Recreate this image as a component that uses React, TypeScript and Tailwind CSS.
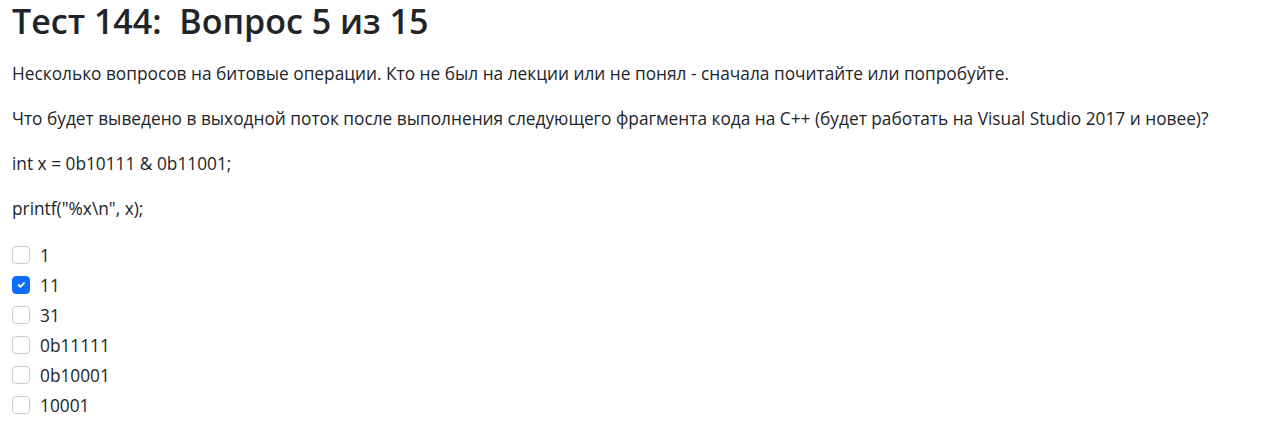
import React from 'react';

const options = ['1', '11', '31', '0b11111', '0b10001', '10001'];

const Check: React.FC<{ checked?: boolean }> = ({ checked }) =>
  checked ? (
    <span className="w-[18px] h-[18px] rounded-[4px] bg-[#0d6efd] border border-[#0d6efd] flex items-center justify-center shrink-0">
      <svg width="12" height="12" viewBox="0 0 20 20" fill="none">
        <path d="M6 10l3 3 6-6" stroke="#fff" strokeWidth="3" strokeLinecap="round" strokeLinejoin="round" />
      </svg>
    </span>
  ) : (
    <span className="w-[18px] h-[18px] rounded-[4px] bg-white border border-[#c9cdd1] shrink-0" />
  );

export default function App() {
  return (
    <div className="min-h-screen bg-white text-[#212529] font-['Open_Sans',sans-serif] px-3">
      <h3 className="text-[34px] font-semibold leading-[41px] pt-[1px] mb-[18px] whitespace-pre">Тест 144:  Вопрос 5 из 15</h3>
      <div className="text-[17.3px] leading-[27px]">
        <p className="mb-[18px]">Несколько вопросов на битовые операции. Кто не был на лекции или не понял - сначала почитайте или попробуйте.</p>
        <p className="mb-[18px]">Что будет выведено в выходной поток после выполнения следующего фрагмента кода на C++ (будет работать на Visual Studio 2017 и новее)?</p>
        <p className="mb-[18px]">int x = 0b10111 &amp; 0b11001;</p>
        <p className="mb-[18px]">printf("%x\n", x);</p>
        <div className="flex flex-col">
          {options.map((o, i) => (
            <label key={o} className="flex items-center gap-[10px] h-[30px]">
              <Check checked={i === 1} />
              <span>{o}</span>
            </label>
          ))}
        </div>
      </div>
    </div>
  );
}
